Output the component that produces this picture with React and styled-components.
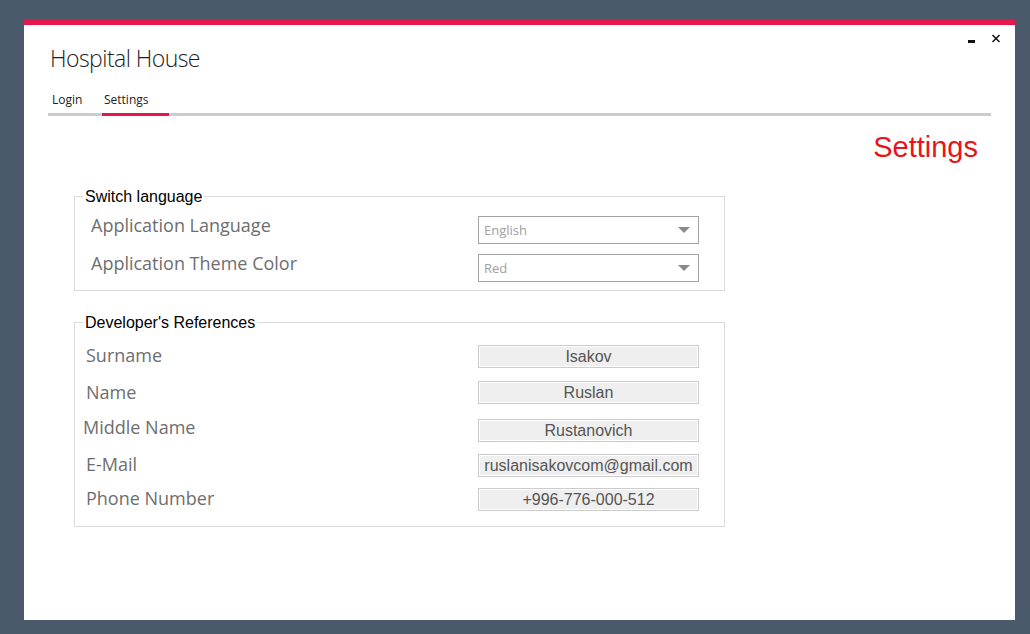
import React from "react";
import styled, { createGlobalStyle } from "styled-components";

const Global = createGlobalStyle`
  html, body { margin: 0; padding: 0; }
  body {
    background: #4a5a6b;
    width: 1030px;
    height: 634px;
    overflow: hidden;
  }
  #root { padding: 20px 0 0 24px; }
  * { box-sizing: border-box; }
`;

const Window = styled.div`
  width: 991px;
  height: 600px;
  background: #ffffff;
  border-top: 5px solid #e8174b;
  display: flex;
  flex-direction: column;
`;

const Header = styled.div`
  display: flex;
  justify-content: space-between;
  align-items: flex-start;
  padding: 0 14px 0 26px;
`;

const Title = styled.h1`
  margin: 18px 0 0 0;
  font-family: "Open Sans", "Noto Sans", sans-serif;
  font-weight: 300;
  font-size: 23px;
  line-height: 30px;
  color: #1e1e1e;
  letter-spacing: -0.55px;
`;

const Controls = styled.div`
  display: flex;
  align-items: flex-end;
  gap: 16px;
  margin-top: 7px;
  height: 11px;
`;

const CtrlButton = styled.button`
  border: 0;
  background: none;
  padding: 0;
  margin: 0;
  display: flex;
  cursor: pointer;
`;

const TabBar = styled.div`
  display: flex;
  margin: 19px 24px 0 24px;
  border-bottom: 3px solid #cccccc;
`;

const Tab = styled.div`
  width: ${(p) => p.$w}px;
  padding: 0 0 5px ${(p) => p.$pl}px;
  margin-bottom: -3px;
  border-bottom: 3px solid ${(p) => (p.$active ? "#e8174b" : "transparent")};
  font-family: "Open Sans", "Noto Sans", sans-serif;
  font-size: 12px;
  line-height: 16px;
  color: #222;
`;

const Heading = styled.h2`
  margin: 14px 0 0 0;
  padding-right: 37px;
  text-align: right;
  font-family: "Liberation Sans", Arial, sans-serif;
  font-weight: 400;
  font-size: 29px;
  line-height: 34px;
  color: #e8131b;
`;

const Group = styled.fieldset`
  margin: ${(p) => p.$mt}px 0 0 50px;
  width: 651px;
  border: 1px solid #dcdcdc;
  padding: ${(p) => p.$pt}px 0 ${(p) => p.$pb}px 0;
  min-width: 0;
`;

const Legend = styled.legend`
  margin-left: 8px;
  padding: 0 2px;
  font-family: "Liberation Sans", Arial, sans-serif;
  font-size: 16px;
  line-height: 18px;
  color: #000;
`;

const LegendText = styled.span`
  position: relative;
  top: 1px;
`;

const Row = styled.div`
  display: grid;
  grid-template-columns: 403px 221px 1fr;
  align-items: start;
  margin-top: ${(p) => p.$mt || 0}px;
`;

const Label = styled.div`
  padding-left: ${(p) => p.$indent}px;
  margin-top: ${(p) => p.$shift}px;
  font-family: "Open Sans", "Noto Sans", sans-serif;
  font-size: 18px;
  line-height: 24px;
  color: #6e6e6e;
  white-space: nowrap;
`;

const Combo = styled.div`
  height: 28px;
  border: 1px solid #a3a3a3;
  background: #fff;
  display: flex;
  align-items: center;
  justify-content: space-between;
  padding: 0 8px 0 5px;
  font-family: "Open Sans", "Noto Sans", sans-serif;
  font-size: 13px;
  color: #a0a0a0;
`;

const Field = styled.div`
  height: 23px;
  border: 1px solid #cbcbcb;
  box-shadow: inset 0 0 0 1px #ffffff;
  background: #efefef;
  display: flex;
  align-items: center;
  justify-content: center;
  font-family: "Liberation Sans", Arial, sans-serif;
  font-size: 16px;
  color: #555555;
  white-space: nowrap;
`;

const Arrow = () => (
  <svg width="12" height="6" viewBox="0 0 12 6">
    <path d="M0 0 H12 L6 6 Z" fill="#8a8a8a" />
  </svg>
);

const selects = [
  { label: "Application Language", value: "English", mt: 0 },
  { label: "Application Theme Color", value: "Red", mt: 10 },
];

const refs = [
  { label: "Surname", value: "Isakov", mt: 0, shift: -2, indent: 11 },
  { label: "Name", value: "Ruslan", mt: 13, shift: -1, indent: 11 },
  { label: "Middle Name", value: "Rustanovich", mt: 15, shift: -4, indent: 8 },
  { label: "E-Mail", value: "ruslanisakovcom@gmail.com", mt: 12, shift: -2, indent: 11 },
  { label: "Phone Number", value: "+996-776-000-512", mt: 11, shift: -2, indent: 11 },
];

export default function App() {
  return (
    <>
      <Global />
      <Window>
        <Header>
          <Title>Hospital House</Title>
          <Controls>
            <CtrlButton aria-label="minimize">
              <svg width="7" height="3" viewBox="0 0 7 3">
                <rect width="7" height="3" fill="#111" />
              </svg>
            </CtrlButton>
            <CtrlButton aria-label="close">
              <svg width="10" height="9" viewBox="0 0 10 9">
                <path d="M1.5 1 L8.5 8 M8.5 1 L1.5 8" stroke="#111" strokeWidth="1.5" />
              </svg>
            </CtrlButton>
          </Controls>
        </Header>
        <TabBar>
          <Tab $w={54} $pl={4}>Login</Tab>
          <Tab $w={67} $pl={2} $active>Settings</Tab>
        </TabBar>
        <Heading>Settings</Heading>
        <Group $mt={23} $pt={11} $pb={8}>
          <Legend><LegendText>Switch language</LegendText></Legend>
          {selects.map((s) => (
            <Row key={s.label} $mt={s.mt}>
              <Label $indent={16} $shift={-3}>{s.label}</Label>
              <Combo>
                <span>{s.value}</span>
                <Arrow />
              </Combo>
            </Row>
          ))}
        </Group>
        <Group $mt={22} $pt={14} $pb={15}>
          <Legend><LegendText>Developer's References</LegendText></Legend>
          {refs.map((r) => (
            <Row key={r.label} $mt={r.mt}>
              <Label $indent={r.indent} $shift={r.shift}>{r.label}</Label>
              <Field>{r.value}</Field>
            </Row>
          ))}
        </Group>
      </Window>
    </>
  );
}
